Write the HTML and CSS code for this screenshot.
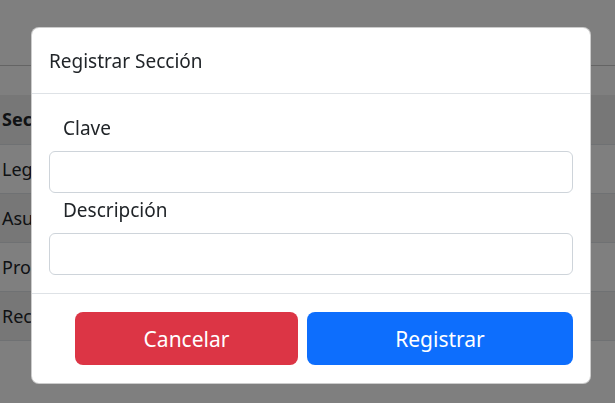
FILE: index.html
```html
<!DOCTYPE html>
<html lang="es">
<head>
<meta charset="utf-8">
<title>Registrar Sección</title>
<link rel="stylesheet" href="styles.css">
</head>
<body>
<div class="page">
  <header class="navbar"></header>
  <table class="table">
    <thead>
      <tr><th>Sección</th><th>Descripción</th></tr>
    </thead>
    <tbody>
      <tr class="odd"><td>Legislativa</td><td>Asuntos legislativos</td></tr>
      <tr class="even"><td>Asuntos</td><td>Asuntos generales</td></tr>
      <tr class="odd"><td>Procesos</td><td>Procesos internos</td></tr>
      <tr class="even"><td>Recursos</td><td>Recursos humanos</td></tr>
    </tbody>
  </table>
</div>
<div class="backdrop"></div>
<div class="modal">
  <div class="modal-header">
    <h5 class="modal-title">Registrar Sección</h5>
  </div>
  <div class="modal-body">
    <label class="label" for="clave">Clave</label>
    <input class="input" id="clave" type="text">
    <label class="label" for="desc">Descripción</label>
    <input class="input" id="desc" type="text">
  </div>
  <div class="modal-footer">
    <button class="btn btn-danger" type="button">Cancelar</button>
    <button class="btn btn-primary" type="button">Registrar</button>
  </div>
</div>
</body>
</html>
```

FILE: styles.css
```css
* { box-sizing: border-box; }
html, body { margin: 0; padding: 0; }
body {
  width: 615px;
  height: 403px;
  overflow: hidden;
  background: #fff;
  font-family: "Noto Sans", "Open Sans", sans-serif;
  color: #212529;
}
.navbar {
  height: 66px;
  border-bottom: 1px solid #c8c8c8;
}
.table {
  margin-top: 29px;
  width: 100%;
  border-collapse: collapse;
  font-size: 18px;
}
.table th, .table td {
  text-align: left;
  padding: 0 2px;
  height: 49px;
  border-bottom: 1px solid #dee2e6;
  white-space: nowrap;
}
.table thead tr { background: #eeeeee; }
.table th { font-weight: 700; }
.table tr.even { background: #eeeeee; }
.backdrop {
  position: fixed;
  inset: 0;
  background: rgba(0, 0, 0, 0.5);
}
.modal {
  position: fixed;
  left: 31px;
  top: 27px;
  width: 560px;
  height: 357px;
  background: #fff;
  border-radius: 8px;
  border: 1px solid rgba(0,0,0,.2);
  display: flex;
  flex-direction: column;
}
.modal-header {
  height: 66px;
  border-bottom: 1px solid #dee2e6;
  display: flex;
  align-items: center;
  padding: 0 17px;
}
.modal-title {
  margin: 0;
  font-size: 19px;
  font-weight: 400;
  color: #212529;
}
.modal-body {
  flex: 1;
  padding: 20px 17px 0;
  display: flex;
  flex-direction: column;
}
.label {
  font-size: 19px;
  padding-left: 14px;
  line-height: 29px;
  height: 37px;
}
.input {
  height: 42px;
  width: 100%;
  border: 1px solid #ced4da;
  border-radius: 6px;
  font: inherit;
  margin: 0 0 3px;
}
.modal-footer {
  height: 90px;
  border-top: 1px solid #dee2e6;
  display: flex;
  justify-content: flex-end;
  align-items: flex-start;
  gap: 9px;
  padding: 18px 17px 0 0;
}
.btn {
  height: 53px;
  border: none;
  border-radius: 8px;
  color: #fff;
  font-family: "Noto Sans", "Open Sans", sans-serif;
  font-size: 21px;
}
.btn-danger { background: #dc3545; width: 223px; }
.btn-primary { background: #0d6efd; width: 266px; }
```
